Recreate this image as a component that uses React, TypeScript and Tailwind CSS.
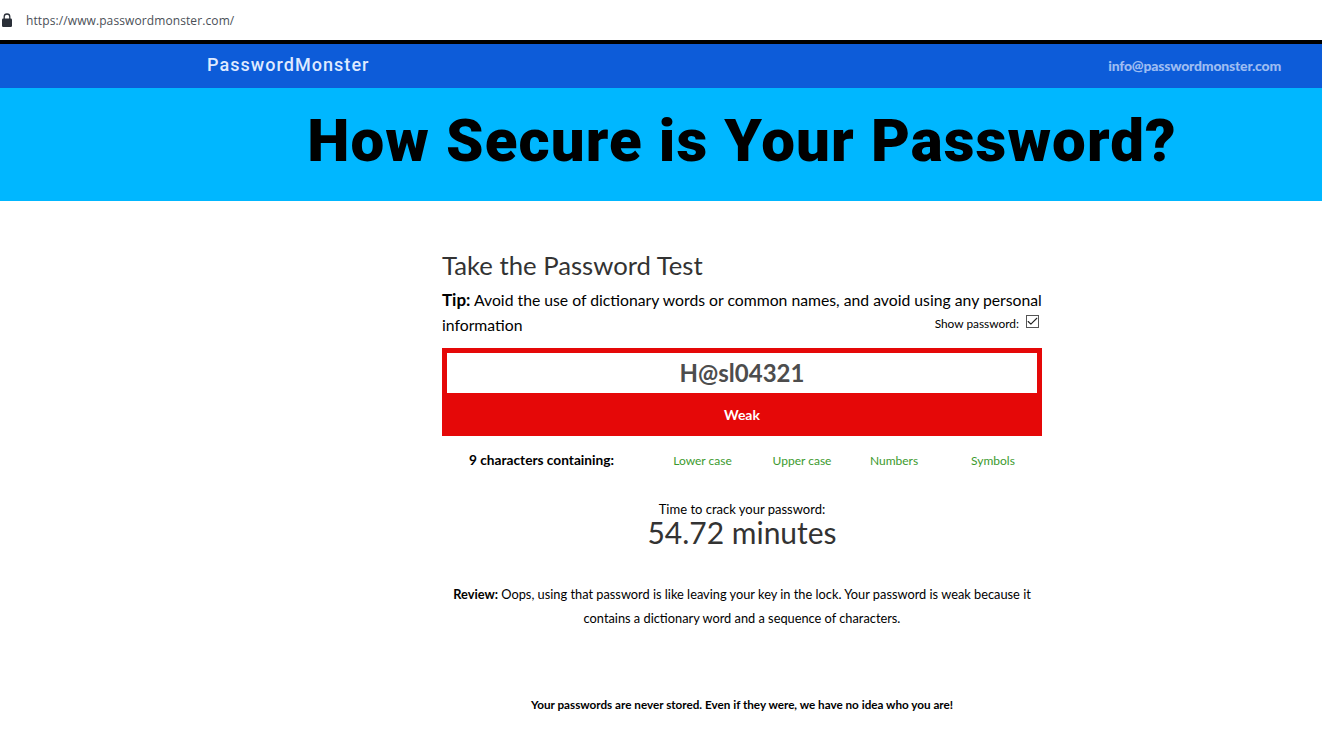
import { Check } from 'lucide-react'

const criteria = [
  { label: 'Lower case', cls: 'w-[99px]' },
  { label: 'Upper case', cls: 'w-[100px]' },
  { label: 'Numbers', cls: 'w-[84px]' },
  { label: 'Symbols', cls: 'ml-[18px] w-[78px]' },
]

export default function App() {
  return (
    <div className="w-[1322px] h-[751px] overflow-hidden bg-white font-['Lato',sans-serif] text-black">
      {/* Browser address bar */}
      <div className="h-10 flex items-center">
        <svg className="w-[10px] h-[14px] ml-[2px] mb-[1px]" viewBox="0 0 10 14">
          <path d="M2.2 6V3.8a2.8 2.8 0 0 1 5.6 0V6" fill="none" stroke="#2a2f38" strokeWidth="1.3" />
          <rect x="0" y="5.5" width="10" height="8.5" rx="1.2" fill="#2a2f38" />
        </svg>
        <span className="ml-[14px] mt-[1px] text-[12px] tracking-[0.1px] text-[#4a4f57] font-['Open_Sans',sans-serif]">
          https://www.passwordmonster.com/
        </span>
      </div>

      {/* Nav */}
      <div className="h-[48px] bg-[#0d5cd9] border-t-4 border-black flex items-center justify-between pl-[207px] pr-[41px]">
        <span className="mb-[3px] text-[18px] font-['Roboto',sans-serif] font-medium tracking-[1.05px] text-[#dfeaff]">PasswordMonster</span>
        <span className="mb-[1px] text-[14px] font-black tracking-[-0.2px] text-[#9dbcf2]">info@passwordmonster.com</span>
      </div>

      {/* Banner */}
      <div className="h-[113px] bg-[#00b7ff] flex items-center justify-center pl-[162px] pb-[8px]">
        <h1 className="text-[60px] leading-none font-black tracking-[1.1px] font-['Roboto',sans-serif]">How Secure is Your Password?</h1>
      </div>

      <main className="w-[600px] ml-[442px] pt-[46px]">
        <h2 className="text-[25.7px] leading-[36px] text-[#333333]">Take the Password Test</h2>
        <p className="mt-[4px] text-[15.75px] leading-[25px] whitespace-nowrap">
          <strong className="text-[17px]">Tip:</strong> Avoid the use of dictionary words or common names, and avoid using any personal
        </p>
        <div className="flex items-center justify-between h-[25px]">
          <span className="text-[15.75px]">information</span>
          <div className="flex items-center gap-[7px] pr-[3px] pb-[2px]">
            <span className="text-[11.9px]">Show password:</span>
            <span className="mb-[3px] w-[13px] h-[13px] border border-[#555555] flex items-center justify-center">
              <Check className="w-[13px] h-[13px] shrink-0 text-[#222222]" strokeWidth={2} />
            </span>
          </div>
        </div>

        {/* Meter */}
        <div className="mt-[11px] bg-[#e50808] px-[5px] pt-[5px]">
          <div className="h-[40px] bg-white flex items-center justify-center text-[24px] font-bold text-[#4d4d4d]">H@sl04321</div>
          <div className="h-[43px] flex items-center justify-center text-[14px] font-bold text-white">Weak</div>
        </div>

        <div className="mt-[14px] flex items-center h-[20px]">
          <span className="w-[211px] pl-[27px] text-[13.7px] font-bold">9 characters containing:</span>
          {criteria.map((c) => (
            <span key={c.label} className={`${c.cls} mt-[2px] text-center text-[12px] text-[#3c9a2e]`}>{c.label}</span>
          ))}
        </div>

        <div className="mt-[31px] text-center">
          <p className="text-[13px] leading-[16px]">Time to crack your password:</p>
          <p className="text-[30px] leading-[30px] text-[#333333]">54.72 minutes</p>
        </div>

        <p className="mt-[35px] text-center text-[12.8px] leading-[24px]">
          <strong>Review:</strong> Oops, using that password is like leaving your key in the lock. Your password is weak because it contains a dictionary word and a sequence of characters.
        </p>

        <p className="mt-[66px] text-center text-[11.7px] font-bold">Your passwords are never stored. Even if they were, we have no idea who you are!</p>
      </main>
    </div>
  )
}
